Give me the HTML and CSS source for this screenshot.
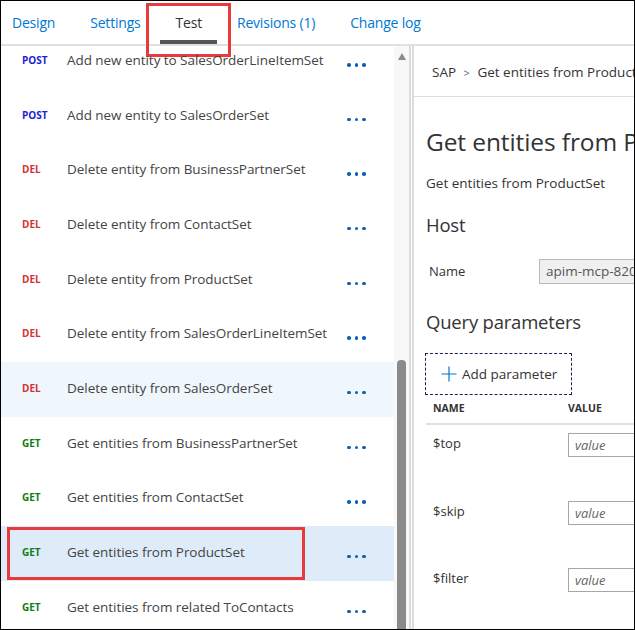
FILE: index.html
```html
<!DOCTYPE html>
<html>
<head>
<meta charset="utf-8">
<link rel="stylesheet" href="styles.css">
</head>
<body>
<div class="frame">
  <div class="tabbar">
    <div class="tab">Design</div>
    <div class="tab">Settings</div>
    <div class="tab active">Test</div>
    <div class="tab">Revisions (1)</div>
    <div class="tab">Change log</div>
  </div>
  <div class="tab-callout"></div>
  <div class="main">
    <div class="ops">
      <div class="ops-list">
        <div class="op"><span class="m post">POST</span><span class="name">Add new entity to SalesOrderLineItemSet</span><span class="dots"><i></i><i></i><i></i></span></div>
        <div class="op"><span class="m post">POST</span><span class="name">Add new entity to SalesOrderSet</span><span class="dots"><i></i><i></i><i></i></span></div>
        <div class="op"><span class="m del">DEL</span><span class="name">Delete entity from BusinessPartnerSet</span><span class="dots"><i></i><i></i><i></i></span></div>
        <div class="op"><span class="m del">DEL</span><span class="name">Delete entity from ContactSet</span><span class="dots"><i></i><i></i><i></i></span></div>
        <div class="op"><span class="m del">DEL</span><span class="name">Delete entity from ProductSet</span><span class="dots"><i></i><i></i><i></i></span></div>
        <div class="op"><span class="m del">DEL</span><span class="name">Delete entity from SalesOrderLineItemSet</span><span class="dots"><i></i><i></i><i></i></span></div>
        <div class="op hover"><span class="m del">DEL</span><span class="name">Delete entity from SalesOrderSet</span><span class="dots"><i></i><i></i><i></i></span></div>
        <div class="op"><span class="m get">GET</span><span class="name">Get entities from BusinessPartnerSet</span><span class="dots"><i></i><i></i><i></i></span></div>
        <div class="op"><span class="m get">GET</span><span class="name">Get entities from ContactSet</span><span class="dots"><i></i><i></i><i></i></span></div>
        <div class="op selected"><span class="m get">GET</span><span class="name">Get entities from ProductSet</span><span class="dots"><i></i><i></i><i></i></span><span class="callout"></span></div>
        <div class="op"><span class="m get">GET</span><span class="name">Get entities from related ToContacts</span><span class="dots"><i></i><i></i><i></i></span></div>
      </div>
    </div>
    <div class="scrollbar">
      <div class="arrow"></div>
      <div class="thumb"></div>
    </div>
    <div class="divider"></div>
    <div class="detail">
      <div class="crumb">SAP <span class="sep">&gt;</span> Get entities from ProductSet</div>
      <div class="body">
        <h1 class="title">Get entities from ProductSet</h1>
        <div class="subtitle">Get entities from ProductSet</div>
        <h2 class="section">Host</h2>
        <div class="host-row">
          <span class="label">Name</span>
          <span class="host-input">apim-mcp-8200.azure-api.net</span>
        </div>
        <h2 class="section qp">Query parameters</h2>
        <div class="add-btn">
          <svg width="16" height="16" viewBox="0 0 16 16"><path d="M8 0.5V15.5M0.5 8H15.5" stroke="#0078d4" stroke-width="1.2" fill="none"/></svg>
          <span>Add parameter</span>
        </div>
        <div class="param-head"><span class="pn">NAME</span><span class="pv">VALUE</span></div>
        <div class="param"><span class="pn">$top</span><span class="val">value</span></div>
        <div class="param"><span class="pn">$skip</span><span class="val">value</span></div>
        <div class="param"><span class="pn">$filter</span><span class="val">value</span></div>
      </div>
    </div>
  </div>
</div>
</body>
</html>
```
FILE: styles.css
```css
html, body {
  margin: 0;
  padding: 0;
  background: #fff;
}
body {
  font-family: "Open Sans", "Noto Sans", sans-serif;
  color: #333;
}
.frame {
  position: relative;
  width: 635px;
  height: 630px;
  box-sizing: border-box;
  border: 1px solid #000;
  overflow: hidden;
  display: flex;
  flex-direction: column;
}
.tabbar {
  height: 43px;
  border-bottom: 2px solid #e1e1e1;
  display: flex;
  gap: 35px;
  padding-left: 11px;
  flex: none;
}
.tab {
  position: relative;
  line-height: 43px;
  font-size: 14px;
  color: #0078d4;
  letter-spacing: -0.2px;
  flex: none;
}
.tab.active {
  color: #333;
}
.tab.active::after {
  content: "";
  position: absolute;
  left: 50%;
  bottom: 0;
  width: 57px;
  height: 4px;
  margin-left: -28.5px;
  background: #555;
}
.tab-callout {
  position: absolute;
  left: 145px;
  top: 2px;
  width: 79px;
  height: 48px;
  border: 3px solid #e8393b;
}
.main {
  flex: 1;
  display: flex;
  min-height: 0;
}
.ops {
  width: 393px;
  overflow: hidden;
  flex: none;
}
.ops-list {
  margin-top: -12px;
}
.op {
  position: relative;
  height: 54.67px;
  box-sizing: border-box;
  padding-top: 17px;
  display: flex;
  align-items: flex-start;
}
.op.hover {
  background: #eff6fc;
}
.op.selected {
  background: #deecf9;
}
.op .m {
  width: 45px;
  padding-left: 21px;
  font-size: 10px;
  font-weight: 700;
  line-height: 19px;
  flex: none;
}
.m.post { color: #1c1cd6; }
.m.del { color: #d13438; }
.m.get { color: #107c10; }
.op .name {
  width: 280px;
  flex: none;
  white-space: nowrap;
  font-size: 13.5px;
  line-height: 18px;
  color: #444;
  letter-spacing: -0.05px;
}
.dots {
  display: flex;
  gap: 4px;
  margin-top: 12px;
  flex: none;
}
.dots i {
  width: 3.5px;
  height: 3.5px;
  border-radius: 50%;
  background: #0f5fae;
}
.callout {
  position: absolute;
  left: 6px;
  top: 1px;
  width: 292px;
  height: 47px;
  border: 3px solid #e8393b;
}
.scrollbar {
  width: 15px;
  flex: none;
  background: #f8f8f8;
  display: flex;
  flex-direction: column;
  align-items: center;
}
.arrow {
  margin-top: 7px;
  width: 0;
  height: 0;
  border-left: 4px solid transparent;
  border-right: 4px solid transparent;
  border-bottom: 7px solid #8a8a8a;
}
.thumb {
  margin-top: 300px;
  width: 9px;
  flex: 1;
  background: #8a8a8a;
  border-radius: 4px 4px 0 0;
}
.divider {
  width: 1px;
  flex: none;
  border-left: 2px solid #dcdcdc;
  border-right: 2px solid #dcdcdc;
}
.detail {
  flex: 1;
  min-width: 0;
  overflow: hidden;
  white-space: nowrap;
}
.crumb {
  height: 51px;
  box-sizing: border-box;
  border-bottom: 1px solid #dedede;
  padding: 16px 0 0 18px;
  font-size: 13.5px;
  line-height: 20px;
  color: #333;
}
.crumb .sep {
  font-size: 11px;
  color: #666;
  margin: 0 4px;
}
.body {
  padding-left: 12px;
}
.title {
  margin: 29px 0 0;
  font-size: 24.5px;
  font-weight: 400;
  line-height: 32px;
  color: #333;
  letter-spacing: -0.1px;
}
.subtitle {
  margin-top: 16px;
  font-size: 13.5px;
  line-height: 18px;
}
.section {
  margin: 20px 0 0;
  font-size: 18.5px;
  font-weight: 400;
  line-height: 26px;
  color: #333;
  letter-spacing: -0.2px;
}
.host-row {
  margin-top: 21px;
  display: flex;
  align-items: center;
  height: 25px;
}
.host-row .label {
  width: 110px;
  flex: none;
  padding-left: 3px;
  font-size: 13px;
  margin-top: -1px;
}
.host-input {
  flex: none;
  height: 25px;
  box-sizing: border-box;
  border: 1px solid #b8b8b8;
  background: #f0f0f0;
  padding: 0 6px;
  font-size: 13.5px;
  line-height: 23px;
  color: #555;
}
.section.qp {
  margin-top: 25px;
}
.add-btn {
  margin-top: 18px;
  width: 147px;
  height: 42px;
  box-sizing: border-box;
  border: 1px dashed #1d1f4d;
  margin-left: -1px;
  display: flex;
  align-items: center;
  gap: 5px;
  padding-left: 15px;
  font-size: 13.5px;
  color: #333;
}
.add-btn svg {
  flex: none;
}
.param-head {
  margin-top: 0;
  height: 28px;
  border-bottom: 2px solid #e1e1e1;
  display: flex;
  font-size: 10.5px;
  font-weight: 700;
  line-height: 26px;
  color: #333;
}
.pn {
  width: 135px;
  padding-left: 7px;
  flex: none;
}
.param {
  height: 67.5px;
  display: flex;
  align-items: flex-start;
  font-size: 13px;
}
.param .pn {
  line-height: 20px;
  margin-top: 8px;
}
.val {
  flex: none;
  margin-top: 8px;
  width: 80px;
  height: 24px;
  box-sizing: border-box;
  border: 1px solid #a6a6a6;
  padding-left: 6px;
  font-style: italic;
  font-size: 13px;
  color: #666;
  line-height: 22px;
}
```
